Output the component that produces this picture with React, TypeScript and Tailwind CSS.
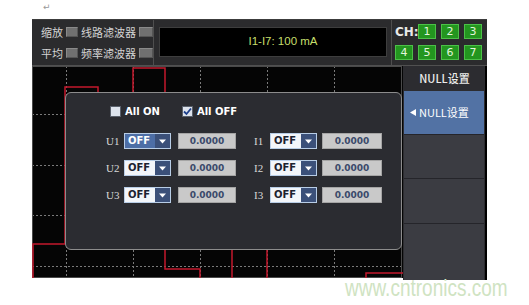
import React from 'react'

const cjk = '"Noto Sans CJK SC", "Noto Sans", sans-serif'

function GrayKey({ w }: { w: string }) {
    return (
        <div
            className={`${w} h-[10px] bg-[#707070] border border-[#8a8a8a] border-b-[#555] border-r-[#555]`}
        />
    )
}

function ChButton({ n }: { n: number }) {
    return (
        <div className="w-[18px] h-[15px] bg-[#23961f] border border-[#4cc048] flex items-center justify-center text-[11px] leading-none text-[#e2f5dc]">
            {n}
        </div>
    )
}

function Dropdown({ active }: { active?: boolean }) {
    return (
        <div className="w-[47px] h-[16px] flex border border-[#b8cde6]">
            <div
                className={`flex-1 flex items-center pl-[3px] text-[10px] font-semibold leading-none ${
                    active
                        ? 'bg-[#4d6ea6] text-white'
                        : 'bg-[#f3f6fa] text-[#1c2230]'
                }`}
            >
                OFF
            </div>
            <div className="w-[15px] bg-[#3b5079] flex items-center justify-center">
                <svg width="7" height="5" viewBox="0 0 7 5">
                    <polygon points="0,0.5 7,0.5 3.5,4.5" fill="#fff" />
                </svg>
            </div>
        </div>
    )
}

function ValueBox({ w }: { w: string }) {
    return (
        <div
            className={`${w} h-[16px] bg-[#c9c9c9] border border-[#a5a5a5] flex items-center justify-center text-[9px] font-bold leading-none text-[#3b4a6b]`}
        >
            0.0000
        </div>
    )
}

function Row({ n }: { n: number }) {
    return (
        <div className="flex items-center pl-[40px] h-[16px]">
            <span className="w-[18px] text-[11px] leading-none text-[#d8d8d8]" style={{ fontFamily: '"Liberation Serif", serif' }}>
                U{n}
            </span>
            <Dropdown active={n === 1} />
            <div className="ml-[7px]">
                <ValueBox w="w-[58px]" />
            </div>
            <span className="ml-[18px] w-[16px] text-[11px] leading-none text-[#d8d8d8]" style={{ fontFamily: '"Liberation Serif", serif' }}>
                I{n}
            </span>
            <div className="w-[46px]">
                <Dropdown />
            </div>
            <div className="ml-[6px]">
                <ValueBox w="w-[60px]" />
            </div>
        </div>
    )
}

function Checkbox({ checked, label }: { checked?: boolean; label: string }) {
    return (
        <div className="flex items-center gap-[4px]">
            <div className="w-[11px] h-[11px] bg-[#dde3ec] border border-[#59606b] flex items-center justify-center">
                {checked && (
                    <svg width="9" height="9" viewBox="0 0 9 9">
                        <path d="M1 4.5 L3.5 7 L8 1.5" stroke="#1d3f8c" strokeWidth="1.8" fill="none" />
                    </svg>
                )}
            </div>
            <span className="text-[10px] font-bold leading-none text-white">{label}</span>
        </div>
    )
}

function Scope() {
    const vx = [34, 101, 168, 235, 302]
    const hy = [48, 99, 149, 200]
    return (
        <svg className="absolute inset-0" width="371" height="212" viewBox="0 0 371 212">
            {vx.map(x => (
                <line key={x} x1={x + 0.5} y1="0" x2={x + 0.5} y2="212" stroke="#7a7a7a" strokeDasharray="2 2" />
            ))}
            {hy.map(y => (
                <line key={y} x1="0" y1={y + 0.5} x2="371" y2={y + 0.5} stroke="#7a7a7a" strokeDasharray="2 2" />
            ))}
            <rect x="0.5" y="0.5" width="369" height="211" fill="none" stroke="#4a4a4a" />
            <g stroke="#c3182c" strokeWidth="1.5" fill="none">
                <path d="M1 212 V178 H33 V21 H66 V100" />
                <path d="M101 100 V2 H133 V203 H168 V212" />
                <path d="M200 150 V212" />
                <path d="M235 150 V212" />
                <path d="M334 212 V207 H371" />
            </g>
        </svg>
    )
}

export default function App() {
    return (
        <div className="relative w-[529px] h-[305px] bg-white overflow-hidden" style={{ fontFamily: '"DejaVu Sans", sans-serif' }}>
            <div className="absolute left-[43px] top-[1px] text-[9px] text-[#999]">↵</div>

            <div className="ml-[32px] pt-[19px] w-[455px]">
                {/* top bar */}
                <div className="h-[47px] flex bg-[#2b2b2d] border-t border-[#3c3c3c] border-b border-b-[#505050]">
                    <div className="w-[122px] border-r border-[#4e4e4e] pl-[9px] pt-[5px] flex flex-col gap-[7px]" style={{ fontFamily: cjk }}>
                        <div className="h-[14px] flex items-center text-[11px] leading-none text-[#d4d4d4]">
                            <span>缩放</span>
                            <div className="ml-[3px]"><GrayKey w="w-[12px]" /></div>
                            <span className="ml-[3px]">线路滤波器</span>
                            <div className="ml-[3px]"><GrayKey w="w-[14px]" /></div>
                        </div>
                        <div className="h-[14px] flex items-center text-[11px] leading-none text-[#d4d4d4]">
                            <span>平均</span>
                            <div className="ml-[3px]"><GrayKey w="w-[12px]" /></div>
                            <span className="ml-[3px]">频率滤波器</span>
                            <div className="ml-[3px]"><GrayKey w="w-[14px]" /></div>
                        </div>
                    </div>
                    <div className="ml-[5px] mt-[7px] w-[228px] h-[30px] bg-black border border-[#3e3e3e] flex items-center justify-center pl-[20px] text-[11.5px] text-[#c6df6c]" style={{ fontFamily: '"Liberation Sans", sans-serif' }}>
                        I1-I7: 100 mA
                    </div>
                    <div className="ml-[4px] flex-1 border-l border-[#4e4e4e] pl-[3px] pt-[4px]">
                        <div className="grid grid-cols-[18px_18px_18px_18px] gap-x-[5px] gap-y-[6px]">
                            <div className="h-[15px] flex items-center text-[12px] font-semibold leading-none text-[#e8e8e8]">CH:</div>
                            <ChButton n={1} />
                            <ChButton n={2} />
                            <ChButton n={3} />
                            <ChButton n={4} />
                            <ChButton n={5} />
                            <ChButton n={6} />
                            <ChButton n={7} />
                        </div>
                    </div>
                </div>

                {/* main */}
                <div className="flex h-[214px]">
                    <div className="relative w-[371px] h-[212px] bg-[#050505]">
                        <Scope />
                        <div className="absolute left-[33px] top-[26px] w-[337px] h-[158px] bg-[#2b2c31] border border-[#8c8c8c] rounded-[6px]">
                            <div className="pl-[44px] pt-[13px] flex gap-[22px]">
                                <Checkbox label="All ON" />
                                <Checkbox checked label="All OFF" />
                            </div>
                            <div className="mt-[16px] flex flex-col gap-[11px]">
                                <Row n={1} />
                                <Row n={2} />
                                <Row n={3} />
                            </div>
                        </div>
                    </div>
                    <div className="w-[84px] bg-[#2c2c30] border-r-2 border-black flex flex-col pl-[1px]" style={{ fontFamily: cjk }}>
                        <div className="h-[25px] flex items-center justify-center text-[11px] font-medium leading-none text-[#ececec]">
                            NULL设置
                        </div>
                        <div className="w-[80px] h-[43px] bg-[#5272a4] flex items-center pl-[6px] gap-[3px] text-[11px] leading-none text-white">
                            <svg width="6" height="7" viewBox="0 0 6 7">
                                <polygon points="6,0 6,7 0,3.5" fill="#fff" />
                            </svg>
                            <span>NULL设置</span>
                        </div>
                        <div className="w-[80px] h-[44px] bg-[#3b3c42] border-t border-[#25252a]" />
                        <div className="w-[80px] h-[45px] bg-[#3b3c42] border-t border-[#25252a]" />
                        <div className="w-[80px] flex-1 bg-[#3b3c42] border-t border-[#25252a]" />
                    </div>
                </div>
            </div>

            <div
                className="absolute left-[345px] top-[276px] text-[19px] leading-none text-[#cfe3c2] scale-y-125 origin-top"
                style={{ fontFamily: '"Liberation Sans", sans-serif' }}
            >
                www.cntronics.com
            </div>
        </div>
    )
}
